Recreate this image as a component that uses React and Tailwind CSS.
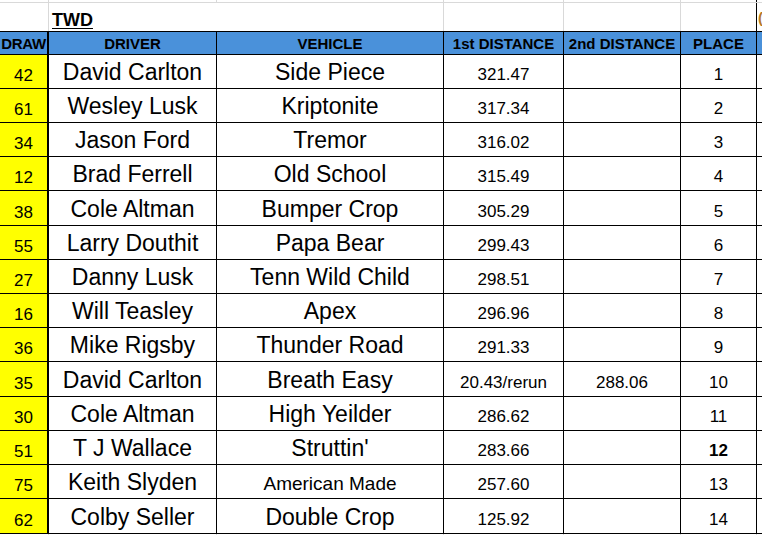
const rows = [
  { draw: '42', driver: 'David Carlton', vehicle: 'Side Piece', d1: '321.47', d2: '', place: '1', h: 'h-[34px]' },
  { draw: '61', driver: 'Wesley Lusk', vehicle: 'Kriptonite', d1: '317.34', d2: '', place: '2', h: 'h-[34px]' },
  { draw: '34', driver: 'Jason Ford', vehicle: 'Tremor', d1: '316.02', d2: '', place: '3', h: 'h-[34px]' },
  { draw: '12', driver: 'Brad Ferrell', vehicle: 'Old School', d1: '315.49', d2: '', place: '4', h: 'h-[34px]' },
  { draw: '38', driver: 'Cole Altman', vehicle: 'Bumper Crop', d1: '305.29', d2: '', place: '5', h: 'h-[35px]' },
  { draw: '55', driver: 'Larry Douthit', vehicle: 'Papa Bear', d1: '299.43', d2: '', place: '6', h: 'h-[34px]' },
  { draw: '27', driver: 'Danny Lusk', vehicle: 'Tenn Wild Child', d1: '298.51', d2: '', place: '7', h: 'h-[34px]' },
  { draw: '16', driver: 'Will Teasley', vehicle: 'Apex', d1: '296.96', d2: '', place: '8', h: 'h-[34px]' },
  { draw: '36', driver: 'Mike Rigsby', vehicle: 'Thunder Road', d1: '291.33', d2: '', place: '9', h: 'h-[34px]' },
  { draw: '35', driver: 'David Carlton', vehicle: 'Breath Easy', d1: '20.43/rerun', d2: '288.06', place: '10', h: 'h-[35px]' },
  { draw: '30', driver: 'Cole Altman', vehicle: 'High Yeilder', d1: '286.62', d2: '', place: '11', h: 'h-[34px]' },
  { draw: '51', driver: 'T J Wallace', vehicle: "Struttin'", d1: '283.66', d2: '', place: '12', h: 'h-[34px]', bold: true },
  { draw: '75', driver: 'Keith Slyden', vehicle: 'American Made', d1: '257.60', d2: '', place: '13', h: 'h-[34px]', small: true },
  { draw: '62', driver: 'Colby Seller', vehicle: 'Double Crop', d1: '125.92', d2: '', place: '14', h: 'h-[35px]' },
];

const font = { fontFamily: '"Liberation Sans", Arial, sans-serif' };

export default function App() {
  return (
    <div className="w-[762px] h-[535px] overflow-hidden bg-white text-black" style={font}>
      {/* sliver of row above */}
      <div className="flex h-[3px] border-b border-[#d9d9d9]">
        <div className="w-[49px] border-r border-[#d9d9d9]" />
        <div className="w-[168px] border-r border-[#d9d9d9]" />
        <div className="w-[227px] border-r border-[#d9d9d9]" />
        <div className="w-[120px] border-r border-[#d9d9d9]" />
        <div className="w-[117px] border-r border-[#d9d9d9]" />
        <div className="w-[76px] border-r border-black" />
      </div>

      {/* title row */}
      <div className="flex h-[28px]">
        <div className="w-[49px] border-r border-[#d9d9d9]" />
        <div className="w-[395px] border-r border-[#d9d9d9] flex items-end pl-[3px] pb-[2px]">
          <span className="text-[18px] font-bold underline underline-offset-2 leading-none">TWD</span>
        </div>
        <div className="w-[120px] border-r border-[#d9d9d9]" />
        <div className="w-[117px] border-r border-[#d9d9d9]" />
        <div className="w-[76px] border-r border-black" />
        <div className="w-[5px] overflow-hidden flex items-center pl-[1px]">
          <span className="text-[15px] font-bold text-[#b7791f] leading-none">(</span>
        </div>
      </div>

      {/* header row */}
      <div className="flex h-[24px] border-y border-black bg-[#4a91da] text-[15px] font-bold leading-none">
        <div className="w-[49px] border-r-2 border-black flex items-center justify-center tracking-[-0.3px]">DRAW</div>
        <div className="w-[168px] border-r border-black flex items-center justify-center">DRIVER</div>
        <div className="w-[227px] border-r border-black flex items-center justify-center">VEHICLE</div>
        <div className="w-[120px] border-r border-black flex items-center justify-center">1st DISTANCE</div>
        <div className="w-[117px] border-r border-black flex items-center justify-center">2nd DISTANCE</div>
        <div className="w-[76px] border-r border-black flex items-center justify-center">PLACE</div>
        <div className="flex-1" />
      </div>

      {/* data rows */}
      {rows.map((r) => (
        <div key={r.place} className={`flex ${r.h} border-b border-black`}>
          <div className="w-[49px] border-r-2 border-black bg-[#ffff00] flex items-end justify-center pb-[4px] text-[17px] leading-none">
            {r.draw}
          </div>
          <div className="w-[168px] border-r border-black flex items-center justify-center pt-[2px] text-[23px] leading-none">
            {r.driver}
          </div>
          <div
            className={`w-[227px] border-r border-black flex justify-center leading-none ${
              r.small ? 'items-end pb-[5px] text-[19px]' : 'items-center pt-[2px] text-[23px]'
            }`}
          >
            {r.vehicle}
          </div>
          <div className="w-[120px] border-r border-black flex items-end justify-center pb-[5px] text-[17px] leading-none">
            {r.d1}
          </div>
          <div className="w-[117px] border-r border-black flex items-end justify-center pb-[5px] text-[17px] leading-none">
            {r.d2}
          </div>
          <div
            className={`w-[76px] border-r border-black flex items-end justify-center pb-[5px] text-[17px] leading-none ${
              r.bold ? 'font-bold' : ''
            }`}
          >
            {r.place}
          </div>
          <div className="flex-1" />
        </div>
      ))}

      {/* empty row below */}
      <div className="flex h-[20px]">
        <div className="w-[49px] border-r border-[#d9d9d9]" />
        <div className="w-[168px] border-r border-[#d9d9d9]" />
        <div className="w-[227px] border-r border-[#d9d9d9]" />
        <div className="w-[120px] border-r border-[#d9d9d9]" />
        <div className="w-[117px] border-r border-[#d9d9d9]" />
        <div className="w-[76px] border-r border-[#d9d9d9]" />
      </div>
    </div>
  );
}
